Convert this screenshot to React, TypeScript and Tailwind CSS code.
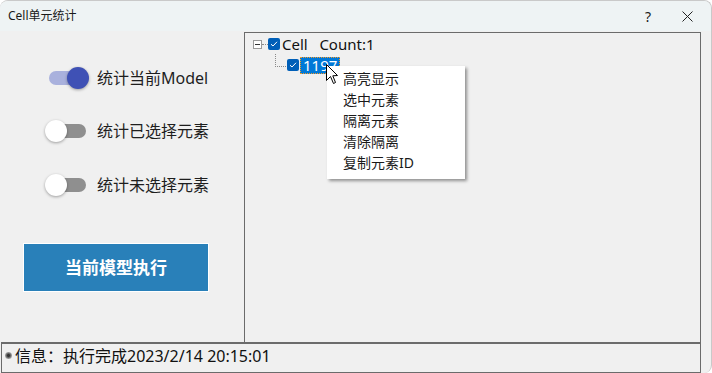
import React from 'react';

const FONT = "font-['Noto_Sans','Noto_Sans_CJK_SC',sans-serif]";

const Toggle: React.FC<{ on?: boolean }> = ({ on }) => (
  <div className="relative w-[44px] h-[22px] shrink-0">
    <div
      className={`absolute left-[4px] right-[3px] top-[4px] h-[14px] rounded-full ${
        on ? 'bg-[#a9b1dd]' : 'bg-[#8f8f8f]'
      }`}
    />
    <div
      className={`absolute top-0 w-[22px] h-[22px] rounded-full shadow-[0_1px_3px_rgba(0,0,0,0.35)] ${
        on ? 'right-0 bg-[#3f51b5]' : 'left-0 bg-white'
      }`}
    />
  </div>
);

const Check: React.FC = () => (
  <div className="w-[12px] h-[12px] rounded-[2px] bg-[#005fb8] flex items-center justify-center shrink-0">
    <svg width="8" height="8" viewBox="0 0 8 8">
      <path d="M1 4.2 L3 6 L7 1.8" fill="none" stroke="#fff" strokeWidth="1" />
    </svg>
  </div>
);

const menuItems = ['高亮显示', '选中元素', '隔离元素', '清除隔离', '复制元素ID'];

const App: React.FC = () => {
  return (
    <div className={`w-[712px] h-[373px] flex flex-col bg-[#f0f0f0] rounded-t-[8px] rounded-br-[8px] border-t border-r border-[#c9c9c9] overflow-hidden ${FONT}`}>
      {/* title bar */}
      <div className="h-[30px] shrink-0 flex items-center bg-[#eef3f4] pl-[8px] text-[12px] text-[#1a1a1a]">
        <span>Cell单元统计</span>
        <span className="ml-auto mr-[31px] text-[14px]">?</span>
        <svg width="11" height="11" viewBox="0 0 11 11" className="mr-[18px]">
          <path d="M0.5 0.5 L10.5 10.5 M10.5 0.5 L0.5 10.5" stroke="#222" strokeWidth="1" />
        </svg>
      </div>

      <div className="h-[311px] shrink-0 flex pt-[1px]">
        {/* left panel */}
        <div className="w-[244px] shrink-0 flex flex-col pt-[35px] text-[16px] text-[#1e1e1e]">
          <div className="flex items-center gap-[8px] ml-[45px] h-[22px]">
            <Toggle on />
            <span>统计当前Model</span>
          </div>
          <div className="flex items-center gap-[8px] ml-[45px] h-[22px] mt-[31px]">
            <Toggle />
            <span>统计已选择元素</span>
          </div>
          <div className="flex items-center gap-[8px] ml-[45px] h-[22px] mt-[32px]">
            <Toggle />
            <span>统计未选择元素</span>
          </div>
          <button className="mt-[47px] ml-[23px] w-[186px] h-[49px] bg-[#2980b9] border border-white text-white font-bold text-[17px]">
            当前模型执行
          </button>
        </div>

        {/* tree panel */}
        <div className="relative w-[457px] border-l border-t border-r border-[#6b6b6b] pt-[2px] text-[15px] text-[#111]">
          <div className="flex items-center h-[18px] pl-[8px]">
            <div className="w-[9px] h-[9px] border border-[#9a9a9a] bg-white flex items-center justify-center shrink-0">
              <div className="w-[5px] h-[1px] bg-[#333]" />
            </div>
            <div className="w-[6px] border-t border-dotted border-[#8a8a8a]" />
            <Check />
            <span className="ml-[2px] leading-none">Cell&nbsp;&nbsp;&nbsp;Count:1</span>
          </div>
          <div className="relative flex items-center h-[18px] mt-[3px] pl-[42px]">
            <div className="absolute left-[30px] top-[-2px] w-[11px] h-[13px] border-l border-b border-dotted border-[#8a8a8a]" />
            <Check />
            <span className="ml-[1px] h-[17px] px-[2px] flex items-center bg-[#0078d7] text-white border border-dotted border-[#f39a2b] leading-none">
              1197
            </span>
          </div>

          {/* context menu */}
          <div className="absolute left-[82px] top-[33px] w-[138px] bg-white pt-[2px] pb-[6px] shadow-[2px_2px_3px_rgba(0,0,0,0.4)] text-[14px] text-[#1a1a1a]">
            {menuItems.map(item => (
              <div key={item} className="h-[21px] flex items-center pl-[16px]">
                {item}
              </div>
            ))}
          </div>

          {/* cursor */}
          <svg className="absolute left-[81px] top-[31px]" width="13" height="21" viewBox="0 0 13 21">
            <path d="M0.5 0.5 L0.5 16.5 L4.5 12.5 L7.5 19.5 L9.5 18.5 L6.8 11.8 L11.5 11.5 Z" fill="#fff" stroke="#000" strokeWidth="1" strokeLinejoin="round" />
          </svg>
        </div>
      </div>

      {/* status bar */}
      <div className="h-[31px] shrink-0 ml-[1px] w-[700px] border-t-2 border-l border-r border-b border-[#6b6b6b] flex items-center pb-[5px] text-[16px] text-[#111]">
        <div className="w-[7px] h-[7px] rounded-full bg-[radial-gradient(circle,#333_20%,#aaa_70%)] ml-[3px] mr-[3px]" />
        <span>信息：执行完成2023/2/14 20:15:01</span>
      </div>
    </div>
  );
};

export default App;
